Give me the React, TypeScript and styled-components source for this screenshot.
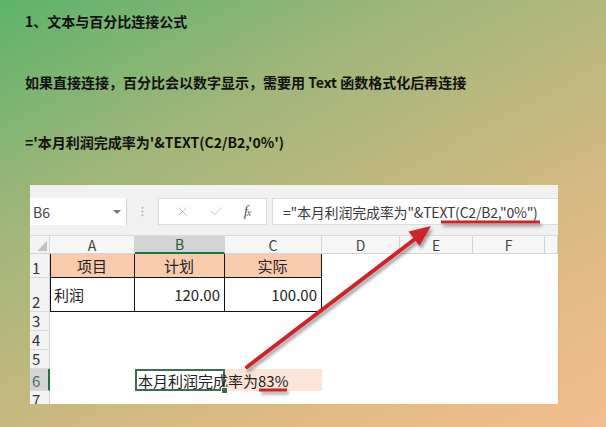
import React from "react";
import styled, { createGlobalStyle } from "styled-components";
import { X, Check, EllipsisVertical } from "lucide-react";

const GlobalStyle = createGlobalStyle`
  html, body { margin: 0; padding: 0; width: 606px; height: 427px; overflow: hidden; }
  body { font-family: "Noto Sans CJK SC", "Noto Sans", sans-serif; }
`;

/* ------------ data ------------ */

const colWidths = [20, 85, 90, 97, 78, 73, 72, 13];
const colLetters = ["", "A", "B", "C", "D", "E", "F", ""];
// last row is cut by the sheet's bottom edge, as in the screenshot
const rowHeights = [24, 34, 19, 19, 19, 22, 19];

type CellData = {
  text?: string;
  align?: "left" | "center" | "right";
  fill?: string;
  boxed?: boolean;
  selected?: boolean;
};

const cells: Record<string, CellData> = {
  "1-1": { text: "项目", align: "center", fill: "#f8cbad", boxed: true },
  "1-2": { text: "计划", align: "center", fill: "#f8cbad", boxed: true },
  "1-3": { text: "实际", align: "center", fill: "#f8cbad", boxed: true },
  "2-1": { text: "利润", align: "left", boxed: true },
  "2-2": { text: "120.00", align: "right", boxed: true },
  "2-3": { text: "100.00", align: "right", boxed: true },
  "6-2": { text: "本月利润完成率为83%", align: "left", selected: true },
  "6-3": { fill: "#fce4d6" },
};

/* ------------ styled parts ------------ */

const Page = styled.div`
  position: relative;
  width: 606px;
  height: 427px;
  overflow: hidden;
  background: linear-gradient(152deg, #5db36b 0%, #9fb67a 30%, #c9b980 58%, #e4bb84 80%, #f2bd8e 100%);
`;

const Notes = styled.div`
  padding: 12px 0 0 25px;
  display: flex;
  flex-direction: column;
`;

const Line = styled.p<{ $gap: number }>`
  margin: ${({ $gap }) => $gap}px 0 0;
  font-size: 14px;
  line-height: 18px;
  font-weight: 700;
  color: #111;
  white-space: nowrap;
`;

const Sheet = styled.div`
  margin: 34px 0 0 30px;
  width: 528px;
  height: 219px;
  background: #fff;
  overflow: hidden;
  display: flex;
  flex-direction: column;
  font-family: "Noto Sans CJK SC", "Noto Sans", sans-serif;
`;

const Toolbar = styled.div`
  height: 51px;
  flex-shrink: 0;
  box-sizing: border-box;
  padding: 13px 0 10px;
  background: #f1f1f1;
  border-bottom: 1px solid #dadada;
  display: flex;
`;

const NameBox = styled.div`
  width: 97px;
  box-sizing: border-box;
  background: #fff;
  border-right: 1px solid #d6d6d6;
  display: flex;
  align-items: center;
  justify-content: space-between;
  padding: 0 5px 0 3px;
  font-size: 14px;
  color: #444;
`;

const Caret = styled.span`
  width: 0;
  height: 0;
  border-left: 4px solid transparent;
  border-right: 4px solid transparent;
  border-top: 4px solid #777;
`;

const Separator = styled.div`
  width: 31px;
  display: flex;
  align-items: center;
  justify-content: center;
  color: #b5b5b5;
`;

const FxButtons = styled.div`
  width: 109px;
  box-sizing: border-box;
  background: #fff;
  border: 1px solid #dcdcdc;
  display: flex;
  align-items: center;
  justify-content: space-around;
  padding: 0 6px;
  color: #c4c4c4;
`;

const Fx = styled.span`
  font-family: "Liberation Serif", serif;
  font-style: italic;
  font-size: 15px;
  color: #555;
  letter-spacing: -1px;
  small { font-size: 10px; }
`;

const FormulaInput = styled.div`
  flex: 1;
  margin-left: 5px;
  background: #fff;
  border: 1px solid #dcdcdc;
  border-right: none;
  display: flex;
  align-items: center;
  padding-left: 10px;
  font-size: 14px;
  color: #3a3a3a;
  white-space: nowrap;
  letter-spacing: -0.2px;
`;

const Grid = styled.div`
  flex-shrink: 0;
  display: grid;
  grid-template-columns: ${colWidths.map((w) => `${w}px`).join(" ")};
  grid-template-rows: 18px ${rowHeights.map((h) => `${h}px`).join(" ")};
`;

const Corner = styled.div`
  background: #f3f3f3;
  border-right: 1px solid #d4d4d4;
  border-bottom: 1px solid #d4d4d4;
  display: flex;
  align-items: flex-end;
  justify-content: flex-end;
  padding: 0 2px 2px 0;
`;

const ColHead = styled.div<{ $active: boolean }>`
  box-sizing: border-box;
  background: ${({ $active }) => ($active ? "#d4d4d4" : "#f6f6f6")};
  border-right: 1px solid #d4d4d4;
  border-bottom: ${({ $active }) => ($active ? "2px solid #217346" : "1px solid #d4d4d4")};
  display: flex;
  align-items: center;
  justify-content: center;
  font-size: 14px;
  color: ${({ $active }) => ($active ? "#1f5c3a" : "#444")};
`;

const RowHead = styled.div<{ $active: boolean }>`
  box-sizing: border-box;
  background: ${({ $active }) => ($active ? "#d4d4d4" : "#f3f3f3")};
  border-right: ${({ $active }) => ($active ? "2px solid #217346" : "1px solid #d4d4d4")};
  border-bottom: 1px solid #dadada;
  display: flex;
  align-items: flex-end;
  padding-left: 2px;
  font-size: 15px;
  line-height: 18px;
  color: ${({ $active }) => ($active ? "#4e6e5a" : "#333")};
`;

const Cell = styled.div<{
  $align: "left" | "center" | "right";
  $fill: string;
  $boxed: boolean;
  $first: boolean;
  $selected: boolean;
}>`
  position: relative;
  box-sizing: border-box;
  background: ${({ $fill }) => $fill};
  border-right: ${({ $boxed }) => ($boxed ? "1px solid #111" : "none")};
  border-bottom: ${({ $boxed }) => ($boxed ? "1px solid #111" : "none")};
  border-left: ${({ $boxed, $first }) => ($boxed && $first ? "1px solid #111" : "none")};
  display: flex;
  align-items: center;
  justify-content: ${({ $align }) =>
    $align === "center" ? "center" : $align === "right" ? "flex-end" : "flex-start"};
  padding: 0 4px 0 3px;
  font-size: 15px;
  color: #222;
  white-space: nowrap;
  z-index: ${({ $selected }) => ($selected ? 2 : "auto")};
  box-shadow: ${({ $selected }) => ($selected ? "inset 0 0 0 2px #3f6b52" : "none")};

  &::after {
    content: "";
    display: ${({ $selected }) => ($selected ? "block" : "none")};
    position: absolute;
    right: -3px;
    bottom: -3px;
    width: 5px;
    height: 5px;
    background: #3f6b52;
    border: 1px solid #fff;
  }
`;

const Annotations = styled.svg`
  position: absolute;
  left: 0;
  top: 0;
  width: 606px;
  height: 427px;
  pointer-events: none;
  overflow: visible;
`;

/* ------------ sheet ------------ */

const SheetGrid: React.FC = () => {
  const out: React.ReactNode[] = [];
  colLetters.forEach((l, c) => {
    if (c === 0) {
      out.push(
        <Corner key="corner">
          <svg width="10" height="10" viewBox="0 0 10 10">
            <polygon points="10,0 10,10 0,10" fill="#c2c2c2" />
          </svg>
        </Corner>
      );
    } else {
      out.push(
        <ColHead key={`h${c}`} $active={l === "B"}>
          {l}
        </ColHead>
      );
    }
  });
  rowHeights.forEach((_, i) => {
    const r = i + 1;
    out.push(
      <RowHead key={`r${r}`} $active={r === 6}>
        {r}
      </RowHead>
    );
    for (let c = 1; c < colWidths.length; c++) {
      const d = cells[`${r}-${c}`] ?? {};
      out.push(
        <Cell
          key={`${r}-${c}`}
          $align={d.align ?? "left"}
          $fill={d.fill ?? "#fff"}
          $boxed={!!d.boxed}
          $first={c === 1}
          $selected={!!d.selected}
        >
          {d.text}
        </Cell>
      );
    }
  });
  return <Grid>{out}</Grid>;
};

export default function App() {
  return (
    <>
      <GlobalStyle />
      <Page>
        <Notes>
          <Line $gap={0}>1、文本与百分比连接公式</Line>
          <Line $gap={43}>如果直接连接，百分比会以数字显示，需要用 Text 函数格式化后再连接</Line>
          <Line $gap={42}>='本月利润完成率为'&amp;TEXT(C2/B2,'0%')</Line>
        </Notes>

        <Sheet>
          <Toolbar>
            <NameBox>
              B6
              <Caret />
            </NameBox>
            <Separator>
              <EllipsisVertical size={13} strokeWidth={2} />
            </Separator>
            <FxButtons>
              <X size={15} strokeWidth={1.6} />
              <Check size={15} strokeWidth={1.6} />
              <Fx>
                f<small>x</small>
              </Fx>
            </FxButtons>
            <FormulaInput>="本月利润完成率为"&amp;TEXT(C2/B2,"0%")</FormulaInput>
          </Toolbar>
          <SheetGrid />
        </Sheet>

        <Annotations viewBox="0 0 606 427">
          <defs>
            <filter id="shade" x="-20%" y="-20%" width="140%" height="140%">
              <feDropShadow dx="2" dy="3" stdDeviation="1.6" floodColor="#000" floodOpacity="0.35" />
            </filter>
          </defs>
          <g filter="url(#shade)">
            <line x1="441" y1="222" x2="540" y2="222" stroke="#c8252b" strokeWidth="3" />
            <line x1="259" y1="390" x2="287" y2="390" stroke="#c8252b" strokeWidth="3" />
            <line x1="247" y1="367" x2="415" y2="239" stroke="#d0242a" strokeWidth="4" strokeLinecap="round" />
            <polygon points="431,226 419.5,246 408.5,231.5" fill="#d0242a" />
          </g>
        </Annotations>
      </Page>
    </>
  );
}
